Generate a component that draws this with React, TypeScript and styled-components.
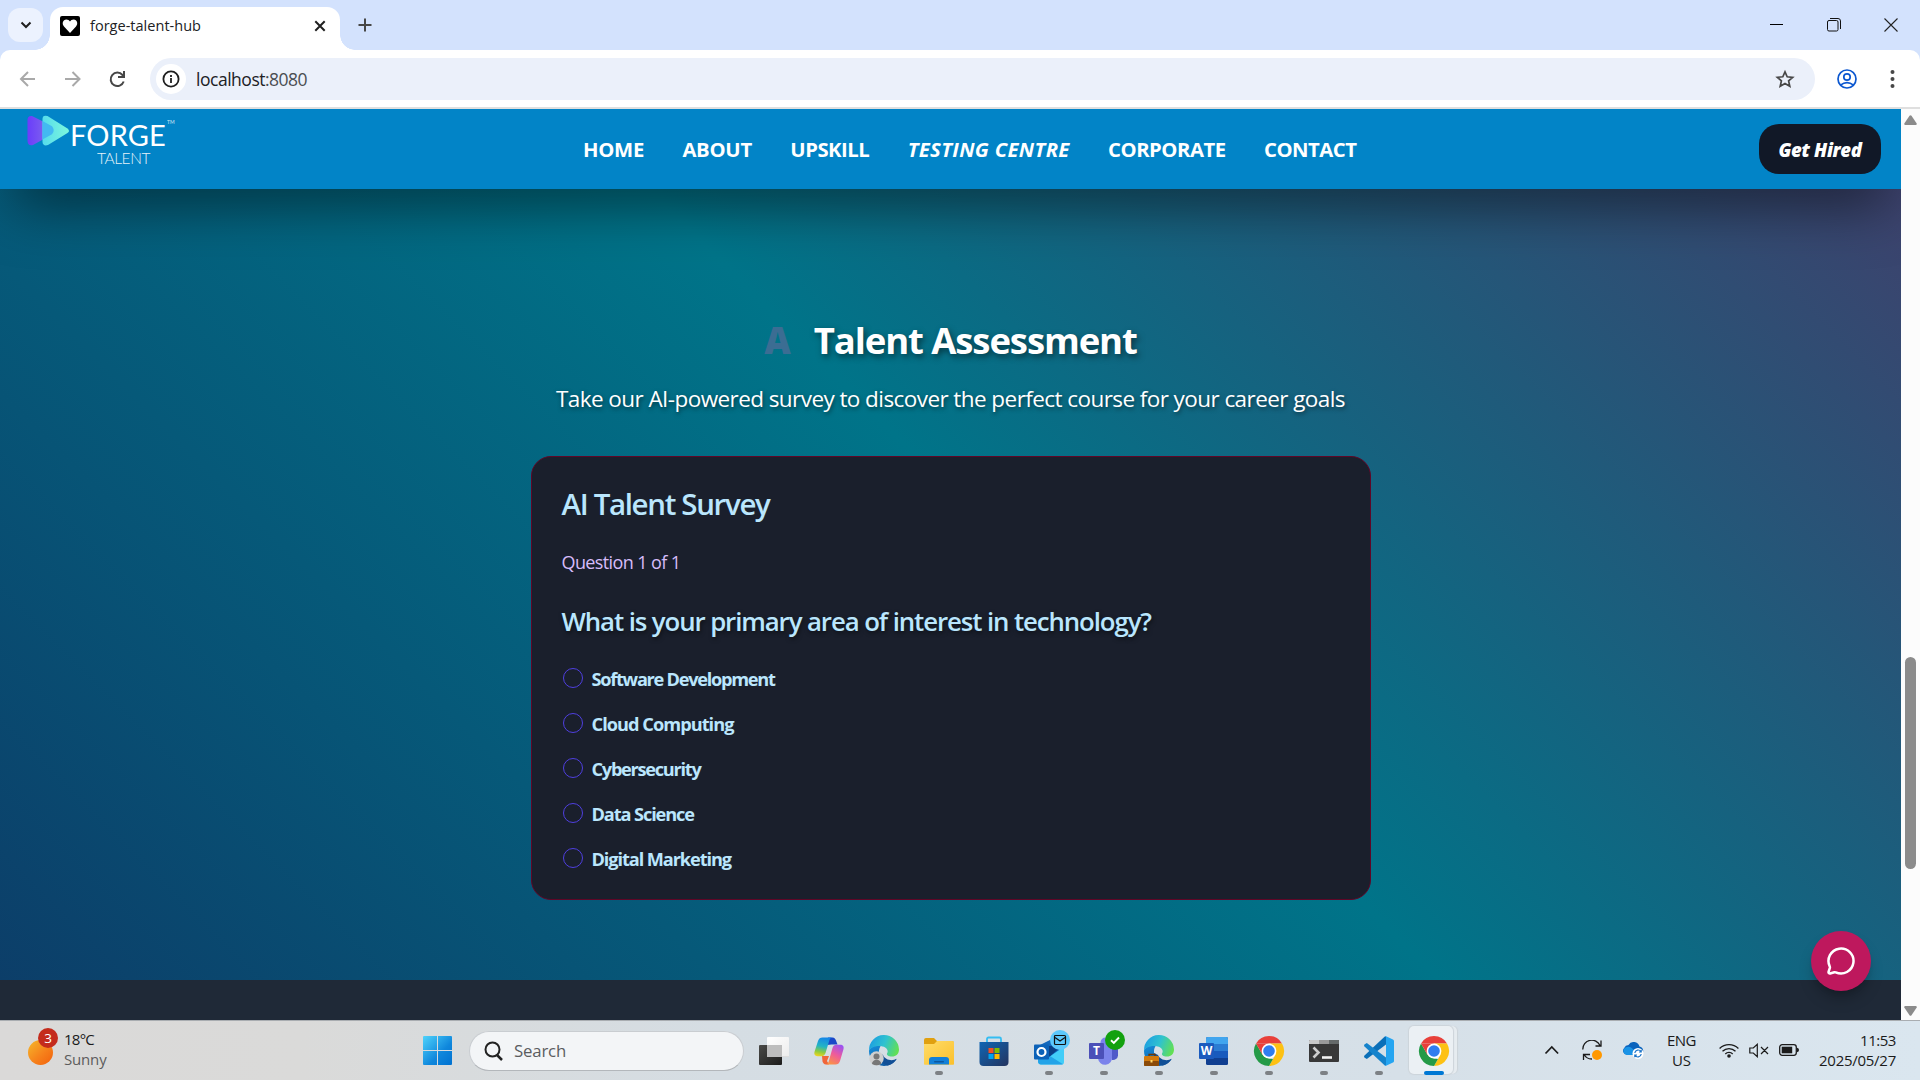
import React, { useLayoutEffect, useRef, useState } from "react";
import styled, { createGlobalStyle } from "styled-components";
import { MessageCircle } from "lucide-react";

const Global = createGlobalStyle`
  * { box-sizing: border-box; }
  html, body { margin: 0; padding: 0; }
  body { font-family: "Open Sans", "Noto Sans", sans-serif; overflow: hidden; width: 1920px; height: 1080px; }
  svg { display: block; flex: none; }
  h1, h2, h3, p, ul { margin: 0; padding: 0; }
`;

const FitSpan = styled.span`
  display: inline-block;
  white-space: pre;
`;

/* Spreads a label over a fixed advance width by adjusting its tracking. */
function Fit({ w, children }: { w: number; children: string }) {
  const ref = useRef<HTMLSpanElement>(null);
  const [spacing, setSpacing] = useState(0);
  useLayoutEffect(() => {
    if (ref.current) {
      const natural = ref.current.getBoundingClientRect().width;
      setSpacing((w - natural) / children.length);
    }
  }, []);
  return (
    <FitSpan ref={ref} style={{ letterSpacing: `${spacing}px` }}>
      {children}
    </FitSpan>
  );
}

/* ---------- Browser chrome ---------- */

const Screen = styled.div`
  width: 1920px;
  height: 1080px;
  display: flex;
  flex-direction: column;
  overflow: hidden;
  background: #d3e2fd;
`;

const TabStrip = styled.div`
  height: 50px;
  display: flex;
  align-items: flex-start;
  padding-left: 8px;
`;

const TabSearch = styled.button`
  width: 35px;
  height: 34px;
  margin-top: 8px;
  border: 0;
  border-radius: 12px;
  background: #ecf2fe;
  display: grid;
  place-items: center;
  padding: 0;
`;

const Tab = styled.div`
  position: relative;
  width: 290px;
  height: 43px;
  margin: 7px 0 0 7px;
  padding: 0 12px 6px 10px;
  background: #fff;
  border-radius: 13px 13px 0 0;
  display: flex;
  align-items: center;
  gap: 10px;
  font-size: 14.5px;
  color: #202124;
  &::before,
  &::after {
    content: "";
    position: absolute;
    bottom: 0;
    width: 15px;
    height: 15px;
  }
  &::before {
    left: -15px;
    background: radial-gradient(circle at 0 0, transparent 14.5px, #fff 15px);
  }
  &::after {
    right: -15px;
    background: radial-gradient(circle at 100% 0, transparent 14.5px, #fff 15px);
  }
`;

const TabTitle = styled.span`
  flex: 1;
  line-height: 20px;
`;

const NewTab = styled.div`
  margin: 18px 0 0 18px;
`;

const WindowButtons = styled.div`
  margin-left: auto;
  height: 50px;
  display: flex;
  padding-right: 1px;
  & > span {
    width: 57px;
    height: 49px;
    display: grid;
    place-items: center;
  }
`;

const Toolbar = styled.div`
  height: 59px;
  background: #fff;
  border-bottom: 2px solid #dfdfdf;
  border-radius: 10px 10px 0 0;
  display: flex;
  align-items: center;
  padding: 0 19px 0 18px;
`;

const NavIcons = styled.div`
  display: flex;
  gap: 26px;
  width: 132px;
`;

const Omnibox = styled.div`
  width: 1665px;
  height: 42px;
  border-radius: 21px;
  background: #ebf0fa;
  display: flex;
  align-items: center;
  padding: 0 20px 0 6px;
  font-size: 17.5px;
  color: #202124;
`;

const SiteInfo = styled.div`
  width: 30px;
  height: 30px;
  border-radius: 50%;
  background: #fff;
  display: grid;
  place-items: center;
  margin-right: 10px;
`;

const Url = styled.div`
  flex: 1;
  padding-top: 1px;
  line-height: 24px;
  & i {
    font-style: normal;
    color: #4a4d51;
  }
`;

const ToolbarEnd = styled.div`
  display: flex;
  align-items: center;
  justify-content: space-between;
  margin-left: auto;
  width: 64px;
`;

/* ---------- Page ---------- */

const Viewport = styled.div`
  height: 911px;
  display: flex;
`;

const Page = styled.main`
  position: relative;
  width: 1901px;
  height: 911px;
  display: flex;
  flex-direction: column;
  overflow: hidden;
`;

const Header = styled.header`
  position: relative;
  z-index: 1;
  height: 80px;
  background: #0284c7;
  box-shadow: 0 28px 56px -14px rgba(0, 0, 0, 0.55);
  display: flex;
  align-items: center;
  padding: 0 20px 0 26px;
`;

const Logo = styled.div`
  width: 557px;
  height: 80px;
  display: flex;
  padding-top: 6px;
`;

const LogoWords = styled.div`
  display: flex;
  flex-direction: column;
  margin-left: -2px;
  font-family: Lato, sans-serif;
  color: #fff;
`;

const Forge = styled.div`
  height: 30px;
  font-size: 29px;
  line-height: 39px;
  font-weight: 400;
  display: flex;
  & sup {
    font-size: 5px;
    line-height: 10px;
    padding: 2px 0 0 1px;
    opacity: 0.8;
  }
`;

const Talent = styled.div`
  padding-left: 27px;
  font-size: 15.5px;
  line-height: 26px;
  font-weight: 300;
  opacity: 0.9;
`;

const Menu = styled.nav`
  display: flex;
  gap: 38.4px;
  color: #fff;
  font-size: 20.3px;
  font-weight: 700;
  line-height: 28px;
`;

const MenuItem = styled.a<{ $italic?: boolean }>`
  font-style: ${(p) => (p.$italic ? "italic" : "normal")};
`;

const GetHired = styled.button`
  margin-left: auto;
  width: 122px;
  height: 50px;
  padding: 1px 0 0;
  border: 0;
  border-radius: 20px;
  background: #111827;
  color: #fff;
  font: italic 800 18.5px/24px "Open Sans", sans-serif;
`;

const Section = styled.section`
  height: 791px;
  padding-top: 131px;
  display: flex;
  flex-direction: column;
  align-items: center;
  background: linear-gradient(45deg, #0c3e69 0%, #007489 50%, #463b69 100%) 0 100% / 1901px 980px no-repeat;
`;

const Title = styled.h1`
  display: flex;
  gap: 23px;
  height: 40px;
  font-size: 36.5px;
  font-weight: 750;
  line-height: 40px;
  color: #fff;
  text-shadow: 2px 3px 6px rgba(0, 0, 0, 0.5);
`;

const FadedLetter = styled.span`
  font-weight: 800;
  color: #3b6d93;
  text-shadow: none;
`;

const Subtitle = styled.p`
  margin-top: 23px;
  font-size: 22.5px;
  line-height: 32px;
  color: #fff;
  text-shadow: 1px 2px 4px rgba(0, 0, 0, 0.5);
`;

const Card = styled.div`
  width: 840px;
  height: 444px;
  margin-top: 41px;
  padding: 28px 30px 0;
  border: 1px solid #5f0627;
  border-radius: 20px;
  background: #1a1f2c;
  color: #bae6fd;
`;

const CardTitle = styled.h2`
  font-size: 29.5px;
  font-weight: 600;
  line-height: 38px;
`;

const Progress = styled.p`
  margin-top: 27px;
  font-size: 18px;
  line-height: 24px;
  color: #d6bcfa;
`;

const Question = styled.h3`
  margin-top: 31px;
  font-size: 25.8px;
  font-weight: 640;
  line-height: 32px;
  text-shadow: 1px 2px 4px rgba(0, 0, 0, 0.5);
`;

const Options = styled.ul`
  margin-top: 19px;
  list-style: none;
`;

const Option = styled.li`
  height: 45px;
  display: flex;
  align-items: center;
  gap: 9px;
  font-size: 18.2px;
  font-weight: 660;
  line-height: 24px;
`;

const Radio = styled.span`
  width: 20px;
  height: 20px;
  margin: -2px 0 0 1px;
  border: 1px solid #4f3fe0;
  border-radius: 50%;
`;

const Footer = styled.footer`
  height: 40px;
  background: #1f2937;
`;

const ChatButton = styled.button`
  position: absolute;
  right: 30px;
  bottom: 29px;
  width: 60px;
  height: 60px;
  border: 0;
  padding: 0;
  border-radius: 50%;
  background: #be185d;
  color: #fff;
  display: grid;
  place-items: center;
  box-shadow: 0 10px 15px -3px rgba(0, 0, 0, 0.25), 0 4px 6px -4px rgba(0, 0, 0, 0.2);
`;

const Scrollbar = styled.div`
  width: 19px;
  background: #fcfcfc;
  display: flex;
  flex-direction: column;
  align-items: center;
  padding: 6px 0 4px;
`;

const Thumb = styled.div`
  width: 11px;
  height: 212px;
  margin: 532px 0 auto;
  border-radius: 6px;
  background: #8b8b8b;
`;

/* ---------- Taskbar ---------- */

const Taskbar = styled.div`
  height: 60px;
  border-top: 1px solid #a9adb1;
  background: linear-gradient(90deg, #dad9d8 0, #dadad9 300px, #d5dde3 720px, #d6e0e8 1400px, #dae6ef 1920px);
  display: flex;
  align-items: center;
  color: #1b1b1b;
  font-size: 15px;
`;

const Weather = styled.div`
  width: 394px;
  height: 59px;
  padding: 0 0 3px 26px;
  display: flex;
  align-items: center;
  gap: 6px;
  line-height: 20px;
`;

const WeatherIcon = styled.div`
  position: relative;
  width: 32px;
  height: 41px;
  padding: 11px 0 0 2px;
`;

const Sun = styled.div`
  width: 25px;
  height: 25px;
  border-radius: 50%;
  background: linear-gradient(135deg, #f5b92c, #f6821b 55%, #f2600c);
`;

const Badge = styled.div`
  position: absolute;
  left: 12px;
  top: -1px;
  width: 20px;
  height: 20px;
  border-radius: 50%;
  background: #c42b1c;
  color: #fff;
  font-size: 13.5px;
  text-align: center;
`;

const Muted = styled.div`
  color: #5c5c5c;
`;

const StartButton = styled.div`
  width: 75px;
  display: flex;
  padding-left: 29px;
`;

const Search = styled.div`
  width: 275px;
  height: 40px;
  border-radius: 20px;
  border: 1px solid #c9cdd1;
  border-bottom-color: #b3b7bb;
  background: #f3f5f7;
  display: flex;
  align-items: center;
  gap: 11px;
  padding: 0 13px;
  font-size: 16.8px;
  color: #5b5d5f;
`;

const Apps = styled.div`
  display: flex;
  margin-left: 2px;
`;

const AppCell = styled.div<{ $active?: boolean }>`
  position: relative;
  width: 55px;
  height: 59px;
  display: grid;
  place-items: center;
  & > svg {
    position: relative;
    overflow: visible;
  }
  &::before {
    content: "";
    display: ${(p) => (p.$active ? "block" : "none")};
    position: absolute;
    left: 3px;
    top: 5px;
    width: 44px;
    height: 48px;
    border-radius: 5px;
    background: #ebf0f4;
    box-shadow: 0 0 1px 1px #cdd4da, 4px 0 0 0 #e6ecf0, 5px 0 1px 0 #cdd4da;
  }
`;

const Running = styled.span<{ $active?: boolean }>`
  position: absolute;
  bottom: 5px;
  width: ${(p) => (p.$active ? 20 : 8)}px;
  height: 4px;
  border-radius: 2px;
  background: ${(p) => (p.$active ? "#0078d4" : "#7d8185")};
`;

const Tray = styled.div`
  margin-left: auto;
  display: flex;
  align-items: center;
  padding: 0 24px 2px 0;
  line-height: 20px;
`;

const TrayGroup = styled.div<{ $gap: number; $end: number }>`
  display: flex;
  align-items: center;
  gap: ${(p) => p.$gap}px;
  margin-right: ${(p) => p.$end}px;
  padding-top: 1px;
`;

const Lines = styled.div<{ $align: string; $end?: number }>`
  text-align: ${(p) => p.$align};
  margin-right: ${(p) => p.$end ?? 0}px;
`;

/* ---------- Icons ---------- */

const Chrome = () => (
  <svg width="30" height="30" viewBox="0 0 30 30">
    <path d="M2 7.5A15 15 0 0 1 28 7.5H15Z" fill="#e8403a" />
    <path d="M28 7.5A15 15 0 0 1 15 30L21.5 18.8 15 7.5Z" fill="#fdc113" />
    <path d="M15 30A15 15 0 0 1 2 7.5L8.5 18.8 15 22.5 19 23Z" fill="#249a47" />
    <path d="M2 7.5 8.5 18.8 15 15V7.5Z" fill="#e8403a" />
    <circle cx="15" cy="15" r="7.4" fill="#fff" />
    <circle cx="15" cy="15" r="5.8" fill="#2f7df0" />
  </svg>
);

const EdgeIcon = ({ work }: { work?: boolean }) => (
  <svg width="30" height="30" viewBox="0 0 30 30">
    <defs>
      <linearGradient id="edgeTop" x1="0" y1="0.3" x2="1" y2="0.6">
        <stop offset="0" stopColor="#1b9de2" />
        <stop offset="0.5" stopColor="#2fc2cf" />
        <stop offset="1" stopColor="#63e052" />
      </linearGradient>
      <linearGradient id="edgeLow" x1="0" y1="0" x2="0.6" y2="1">
        <stop offset="0" stopColor="#1690dc" />
        <stop offset="1" stopColor="#0c59a4" />
      </linearGradient>
    </defs>
    <path d="M0 15C0 12 6 8.500 12 9.500C9 13 9 20 14 24C18 27 23 26 27.500 23C25 27 20 30 15 30A15 15 0 0 1 0 15Z" fill="url(#edgeLow)" />
    <path d="M10 17C9 23 14 29.500 19 29.400C23 28.500 26 26 27.800 22.800C23 25.500 16 24 14 19Z" fill="#114f96" />
    <path d="M0 14.500A15 15 0 0 1 30 13.500C30 18 27 20.500 23 20.500C19 20.500 17.500 19 18 17.500C20 15 17.500 11 13.500 10.500C7 9 1.500 12 0 14.500Z" fill="url(#edgeTop)" />
    {work ? (
      <g>
        <path d="M5 20v-1.500h6V20" fill="none" stroke="#6b3a08" strokeWidth="1.300" />
        <rect x="0" y="20" width="15" height="10" rx="1" fill="#d27a0c" />
        <rect x="0" y="25" width="15" height="5" rx="1" fill="#8a4a08" />
        <rect x="6.500" y="24" width="2" height="2.500" fill="#ffd76a" />
      </g>
    ) : (
      <g>
        <circle cx="7.500" cy="22.500" r="7.200" fill="#cfcfcf" />
        <circle cx="7.500" cy="20.500" r="3" fill="#777" />
        <path d="M3 28a4.600 4.200 0 0 1 9.200 0q-4.500 2.500-9.200 0Z" fill="#777" />
      </g>
    )}
  </svg>
);

const TaskView = () => (
  <svg width="30" height="30" viewBox="0 0 30 30">
    <defs>
      <linearGradient id="tvDark" x1="0" y1="0" x2="1" y2="1">
        <stop offset="0" stopColor="#4a4a48" />
        <stop offset="1" stopColor="#1c1c1b" />
      </linearGradient>
      <linearGradient id="tvLight" x1="0" y1="0" x2="1" y2="1">
        <stop offset="0" stopColor="#ffffff" />
        <stop offset="1" stopColor="#ececec" />
      </linearGradient>
    </defs>
    <rect x="0" y="9" width="23" height="20" rx="1" fill="url(#tvDark)" />
    <rect x="8" y="1" width="22" height="20" rx="1" fill="url(#tvLight)" />
    <rect x="8" y="9" width="15" height="12" fill="#bdbdbd" />
    <path d="M23 20h7v1h-7z" fill="#ddd" />
  </svg>
);

const Copilot = () => (
  <svg width="30" height="30" viewBox="0 0 30 30">
    <defs>
      <linearGradient id="cpA" x1="0.4" y1="0" x2="0.2" y2="1">
        <stop offset="0" stopColor="#1688e6" />
        <stop offset="0.45" stopColor="#23b5c4" />
        <stop offset="0.75" stopColor="#8ecb3f" />
        <stop offset="1" stopColor="#f2d51e" />
      </linearGradient>
      <linearGradient id="cpB" x1="0.8" y1="0" x2="0.3" y2="1">
        <stop offset="0" stopColor="#9a52f2" />
        <stop offset="0.5" stopColor="#ee5b9b" />
        <stop offset="1" stopColor="#fb9246" />
      </linearGradient>
    </defs>
    <path d="M14 1.500h4.500c2 0 3 1.500 3.500 3l1.500 4h-6L13 9Z" fill="#1a48c8" />
    <path d="M8 20h7l-2 5 2 3.500h-3c-2 0-3-1.500-3.500-3Z" fill="#f0663a" />
    <path d="M8.500 1.500H18c-1.600.4-2.200 1.500-2.700 3L11.500 17c-.7 2-1.800 3.200-4 3.200H3.500C.8 20.200-.2 18 .6 15.500L4 5C4.800 2.600 6.300 1.500 8.500 1.500Z" fill="url(#cpA)" />
    <path d="M21.500 28.500H12c1.600-.4 2.200-1.500 2.700-3L18.500 12c.7-2 1.800-3.200 4-3.200h4c2.700 0 3.700 2.200 2.900 4.700L26 25c-.8 2.400-2.300 3.500-4.500 3.500Z" fill="url(#cpB)" />
  </svg>
);

const Explorer = () => (
  <svg width="30" height="30" viewBox="0 0 30 30">
    <defs>
      <linearGradient id="fold" x1="0" y1="0" x2="1" y2="1">
        <stop offset="0" stopColor="#ffdc68" />
        <stop offset="1" stopColor="#fbc02c" />
      </linearGradient>
    </defs>
    <path d="M0 4a2 2 0 0 1 2-2h8l3 3h15a2 2 0 0 1 2 2v4H0Z" fill="#e0a010" />
    <path d="M0 8h10l3-3h15.500L30 6v22a.8.8 0 0 1-.8.800H.800A.8.800 0 0 1 0 28Z" fill="url(#fold)" />
    <path d="M5 28.500V24a3 3 0 0 1 3-3h14a3 3 0 0 1 3 3v4.500Z" fill="#1280d8" />
    <rect x="10" y="25" width="10" height="1.500" rx=".7" fill="#0b579f" />
  </svg>
);

const Store = () => (
  <svg width="30" height="30" viewBox="0 0 30 30">
    <defs>
      <linearGradient id="store" x1="0" y1="0" x2="1" y2="1">
        <stop offset="0" stopColor="#0f66b4" />
        <stop offset="1" stopColor="#24345f" />
      </linearGradient>
    </defs>
    <path d="M8 7V3a1.500 1.500 0 0 1 1.500-1.500h11A1.500 1.500 0 0 1 22 3v4" fill="none" stroke="#35bdf2" strokeWidth="1.800" />
    <path d="M.5 6h29v20a4 4 0 0 1-4 4h-21a4 4 0 0 1-4-4Z" fill="url(#store)" />
    <rect x="9.500" y="12" width="5" height="5" fill="#f25022" />
    <rect x="15.500" y="12" width="5" height="5" fill="#7fba00" />
    <rect x="9.500" y="18" width="5" height="5" fill="#00a4ef" />
    <rect x="15.500" y="18" width="5" height="5" fill="#ffb900" />
  </svg>
);

const Outlook = () => (
  <svg width="30" height="30" viewBox="0 0 30 30">
    <path d="M6 9 20 2l10 9v12H6Z" fill="#1268bd" />
    <path d="M15 21 28 12l2 .5V26a2.500 2.500 0 0 1-2.500 2.500H7A3 3 0 0 1 4 25Z" fill="#42cdf8" />
    <path d="M4 23l12-3 13 8.200-1 .3H7A3 3 0 0 1 4 25Z" fill="#23a3e8" />
    <path d="M15 10h13L15 21Z" fill="#0a3f86" />
    <rect x="0" y="8.500" width="15" height="15" rx="1" fill="#0c62b8" />
    <circle cx="7.500" cy="16" r="4" fill="none" stroke="#fff" strokeWidth="2.200" />
    <circle cx="26" cy="4" r="10" fill="#5cc8fb" />
    <rect x="20.500" y="-.5" width="11" height="9" rx="1" fill="none" stroke="#111" strokeWidth="1.200" />
    <path d="m21 1.500 5 3.500 5-3.500" fill="none" stroke="#111" strokeWidth="1.200" />
  </svg>
);

const IconLetter = styled.text`
  font: 700 12px "Open Sans", sans-serif;
  fill: #fff;
  text-anchor: middle;
`;

const Teams = () => (
  <svg width="30" height="30" viewBox="0 0 30 30">
    <circle cx="16.500" cy="6.500" r="5" fill="#7b83eb" />
    <path d="M20 11h9v8.500a5 5 0 0 1-6 4.500Z" fill="#5059c9" />
    <path d="M9 11h14v10a7 7 0 0 1-14 1.500Z" fill="#7b83eb" />
    <rect x="0" y="7" width="15" height="16" rx="1" fill="#4b4fb8" />
    <IconLetter x="7.500" y="19.300">T</IconLetter>
    <circle cx="26" cy="4" r="10" fill="#13a10e" />
    <path d="m22 4.300 2.800 2.700L30 1.500" fill="none" stroke="#fff" strokeWidth="1.900" />
  </svg>
);

const Word = () => (
  <svg width="30" height="30" viewBox="0 0 30 30">
    <rect x="7" y="1" width="22" height="28" rx="1.500" fill="#103f91" />
    <path d="M7 2.500A1.500 1.500 0 0 1 8.500 1h19A1.500 1.500 0 0 1 29 2.500V8H7Z" fill="#41a5ee" />
    <rect x="7" y="8" width="22" height="7" fill="#2b7cd3" />
    <rect x="7" y="15" width="22" height="7" fill="#185abd" />
    <rect x="0" y="7" width="15" height="16" rx="1" fill="#1b5bbe" />
    <IconLetter x="7.500" y="19.300">W</IconLetter>
  </svg>
);

const TerminalIcon = () => (
  <svg width="30" height="30" viewBox="0 0 30 30">
    <rect x="0" y="4" width="30" height="22" rx="1" fill="#383838" />
    <path d="M0 5a1 1 0 0 1 1-1h9v4H0Z" fill="#c8c8c8" />
    <rect x="10" y="4" width="10" height="4" fill="#999" />
    <path d="M20 4h9a1 1 0 0 1 1 1v3H20Z" fill="#656a6a" />
    <path d="m4.500 11.500 5 5-5 5" fill="none" stroke="#ccc" strokeWidth="2.600" />
    <path d="M13 21.500h10" stroke="#f2f2f2" strokeWidth="2.600" />
  </svg>
);

const VsCode = () => (
  <svg width="30" height="30" viewBox="0 0 30 30">
    <path d="M22 8.500 2.800 23 .4 21.400Q-.4 20.500.5 19.600L20.500.8 22 .3Z" fill="#0a6fb8" />
    <path d="M22 21.500 2.800 7 .4 8.600Q-.4 9.500.5 10.400L20.500 29.200 22 29.700Z" fill="#1583cc" />
    <path d="M22 .2 29 3.500q1 .5 1 1.600v19.800q0 1.100-1 1.600L22 29.800q-1 .3-1.800-.6 1.500 1 1.800-.8V1.600Q21.700-.2 20.200.8 21-.1 22 .2Z" fill="#25a5f1" />
  </svg>
);

const Windows = () => (
  <svg width="29" height="29" viewBox="0 0 29 29">
    <defs>
      <linearGradient id="win" x1="0" y1="0" x2="29" y2="29" gradientUnits="userSpaceOnUse">
        <stop offset="0" stopColor="#4fd3fb" />
        <stop offset="0.6" stopColor="#0f87dc" />
        <stop offset="1" stopColor="#0071d0" />
      </linearGradient>
    </defs>
    <path d="M1 0h13v14H0V1Q0 0 1 0ZM15 0h13q1 0 1 1v13H15ZM0 15h14v14H1q-1 0-1-1ZM15 15h14v13q0 1-1 1H15Z" fill="url(#win)" />
  </svg>
);

const LogoMark = () => (
  <svg width="46" height="32" viewBox="0 0 46 32">
    <defs>
      <linearGradient id="lp" x1="0" x2="1">
        <stop offset="0" stopColor="#6a3dfb" />
        <stop offset="0.55" stopColor="#7a5af0" />
        <stop offset="1" stopColor="#4fb8f2" />
      </linearGradient>
      <linearGradient id="lt" x1="0" x2="1">
        <stop offset="0" stopColor="#55dcec" />
        <stop offset="1" stopColor="#7df7dc" />
      </linearGradient>
    </defs>
    <path d="M1.500 5q0-4.500 4.500-4L26 11q4 4 0 8.500L7 30q-5 1.500-5.500-4Z" fill="url(#lp)" />
    <path d="M16.500 4q0-4.500 5-3l20 12.500q3 2.500 0 4.500L22 30q-5 1.500-5.500-3Z" fill="url(#lt)" />
    <path d="M16.500 6 26 11.200q3.500 4 0 8L16.500 24.500Z" fill="#43b9f2" />
  </svg>
);

const options: [string, number][] = [
  ["Software Development", 183],
  ["Cloud Computing", 142],
  ["Cybersecurity", 109],
  ["Data Science", 102.5],
  ["Digital Marketing", 139.5],
];

const menu: [string, number, boolean?][] = [
  ["HOME", 61],
  ["ABOUT", 69.5],
  ["UPSKILL", 79],
  ["TESTING CENTRE", 162, true],
  ["CORPORATE", 117.5],
  ["CONTACT", 92.5],
];

const apps: { icon: React.ReactNode; running?: boolean; active?: boolean }[] = [
  { icon: <TaskView /> },
  { icon: <Copilot /> },
  { icon: <EdgeIcon /> },
  { icon: <Explorer />, running: true },
  { icon: <Store /> },
  { icon: <Outlook />, running: true },
  { icon: <Teams />, running: true },
  { icon: <EdgeIcon work />, running: true },
  { icon: <Word />, running: true },
  { icon: <Chrome />, running: true },
  { icon: <TerminalIcon />, running: true },
  { icon: <VsCode />, running: true },
  { icon: <Chrome />, running: true, active: true },
];

export default function App() {
  return (
    <Screen>
      <Global />
      <TabStrip>
        <TabSearch>
          <svg width="12" height="8" viewBox="0 0 12 8" fill="none" stroke="#1f1f1f" strokeWidth="2">
            <path d="m1.500 1.500 4.500 4.500 4.500-4.500" />
          </svg>
        </TabSearch>
        <Tab>
          <svg width="20" height="20" viewBox="0 0 20 20">
            <rect width="20" height="20" rx="2" fill="#000" />
            <path d="M10 17 4 10.500C1.500 7.500 3 3.500 6.300 3.500 8 3.500 9.300 4.400 10 5.500 10.700 4.400 12 3.500 13.700 3.500 17 3.500 18.500 7.500 16 10.500Z" fill="#fff" />
          </svg>
          <TabTitle>
            <Fit w={111}>forge-talent-hub</Fit>
          </TabTitle>
          <svg width="16" height="16" viewBox="0 0 16 16" stroke="#1f1f1f" strokeWidth="2">
            <path d="m3.300 3.300 9.400 9.400m0-9.400-9.400 9.400" />
          </svg>
        </Tab>
        <NewTab>
          <svg width="14" height="14" viewBox="0 0 14 14" stroke="#474747" strokeWidth="2">
            <path d="M7 .5v13M.5 7h13" />
          </svg>
        </NewTab>
        <WindowButtons>
          <span>
            <svg width="13" height="2" viewBox="0 0 13 2"><path d="M0 .5h13" stroke="#000" /></svg>
          </span>
          <span>
            <svg width="14" height="14" viewBox="0 0 14 14" fill="none" stroke="#111">
              <rect x=".5" y="2.500" width="10.500" height="10.500" rx="1.500" />
              <path d="M3 .5h8A2.500 2.500 0 0 1 13.500 3v8" />
            </svg>
          </span>
          <span>
            <svg width="14" height="14" viewBox="0 0 14 14" stroke="#222" strokeWidth="1.100">
              <path d="m.5.5 13 13m0-13-13 13" />
            </svg>
          </span>
        </WindowButtons>
      </TabStrip>

      <Toolbar>
        <NavIcons>
          <svg width="19" height="18" viewBox="0 0 19 18" fill="none" stroke="#a9a9a9" strokeWidth="2">
            <path d="M17 9H3.500M10 2 3 9l7 7" />
          </svg>
          <svg width="19" height="18" viewBox="0 0 19 18" fill="none" stroke="#a9a9a9" strokeWidth="2">
            <path d="M2 9h14M9.500 2l7 7-7 7" />
          </svg>
          <svg width="18" height="18" viewBox="0 0 18 18" fill="none" stroke="#474747" strokeWidth="2">
            <path d="M15.700 11.500A6.700 6.700 0 1 1 14.500 5l1.500 1.500M16 1v6h-6" />
          </svg>
        </NavIcons>
        <Omnibox>
          <SiteInfo>
            <svg width="18" height="18" viewBox="0 0 18 18" fill="none" stroke="#1f1f1f" strokeWidth="1.800">
              <circle cx="9" cy="9" r="7.600" />
              <path d="M9 8v5M9 5v1.900" />
            </svg>
          </SiteInfo>
          <Url>
            <Fit w={69}>localhost</Fit>
            <i><Fit w={42}>:8080</Fit></i>
          </Url>
          <svg width="20" height="20" viewBox="0 0 20 20" fill="none" stroke="#474747" strokeWidth="1.700">
            <path d="m10 2.800 2.200 5 5.500.5-4.100 3.600 1.200 5.400-4.800-2.900-4.800 2.900 1.200-5.400-4.100-3.600 5.500-.5Z" />
          </svg>
        </Omnibox>
        <ToolbarEnd>
          <svg width="20" height="20" viewBox="0 0 20 20" fill="none" stroke="#0b57d0" strokeWidth="1.700">
            <circle cx="10" cy="10" r="9" />
            <circle cx="10" cy="8" r="3.200" />
            <path d="M3.500 16.200Q10 11 16.500 16.200" />
          </svg>
          <svg width="16" height="20" viewBox="0 0 16 20" fill="#474747">
            <circle cx="7.500" cy="3" r="2" />
            <circle cx="7.500" cy="10" r="2" />
            <circle cx="7.500" cy="17" r="2" />
          </svg>
        </ToolbarEnd>
      </Toolbar>

      <Viewport>
        <Page>
          <Header>
            <Logo>
              <LogoMark />
              <LogoWords>
                <Forge>
                  <Fit w={96}>FORGE</Fit>
                  <sup>TM</sup>
                </Forge>
                <Talent>
                  <Fit w={53}>TALENT</Fit>
                </Talent>
              </LogoWords>
            </Logo>
            <Menu>
              {menu.map(([label, w, italic]) => (
                <MenuItem key={label} $italic={italic}>
                  <Fit w={w}>{label}</Fit>
                </MenuItem>
              ))}
            </Menu>
            <GetHired>
              <Fit w={83}>Get Hired</Fit>
            </GetHired>
          </Header>
          <Section>
            <Title>
              <FadedLetter>A</FadedLetter>
              <Fit w={323}>Talent Assessment</Fit>
            </Title>
            <Subtitle>
              <Fit w={789}>Take our AI-powered survey to discover the perfect course for your career goals</Fit>
            </Subtitle>
            <Card>
              <CardTitle>
                <Fit w={208}>AI Talent Survey</Fit>
              </CardTitle>
              <Progress>
                <Fit w={119}>Question 1 of 1</Fit>
              </Progress>
              <Question>
                <Fit w={589.5}>What is your primary area of interest in technology?</Fit>
              </Question>
              <Options>
                {options.map(([label, w]) => (
                  <Option key={label}>
                    <Radio />
                    <Fit w={w}>{label}</Fit>
                  </Option>
                ))}
              </Options>
            </Card>
          </Section>
          <Footer />
          <ChatButton>
            <MessageCircle size={30} strokeWidth={2} />
          </ChatButton>
        </Page>
        <Scrollbar>
          <svg width="13" height="10" viewBox="0 0 13 10" fill="#8b8b8b">
            <path d="M5.500.8q1-1.300 2 0L12.700 8.500q.3 1.500-1 1.500H1.300Q0 10 .3 8.500Z" />
          </svg>
          <Thumb />
          <svg width="13" height="10" viewBox="0 0 13 10" fill="#8b8b8b">
            <path d="M5.500 9.200q1 1.300 2 0L12.700 1.500q.3-1.500-1-1.500H1.300Q0 0 .3 1.500Z" />
          </svg>
        </Scrollbar>
      </Viewport>

      <Taskbar>
        <Weather>
          <WeatherIcon>
            <Sun />
            <Badge>3</Badge>
          </WeatherIcon>
          <div>
            <div><Fit w={30}>18°C</Fit></div>
            <Muted><Fit w={42.5}>Sunny</Fit></Muted>
          </div>
        </Weather>
        <StartButton>
          <Windows />
        </StartButton>
        <Search>
          <svg width="20" height="20" viewBox="0 0 20 20" fill="none" stroke="#222" strokeWidth="2">
            <circle cx="9.500" cy="8.500" r="7" />
            <path d="m14 14 5 5" strokeWidth="2.500" />
          </svg>
          <Fit w={52}>Search</Fit>
        </Search>
        <Apps>
          {apps.map((app, i) => (
            <AppCell key={i} $active={app.active}>
              {app.icon}
              {app.running && <Running $active={app.active} />}
            </AppCell>
          ))}
        </Apps>
        <Tray>
          <TrayGroup $gap={21.5} $end={23}>
            <svg width="16" height="10" viewBox="0 0 16 10" fill="none" stroke="#1b1b1b" strokeWidth="1.700">
              <path d="m1.500 8.500 6.300-6.500 6.300 6.500" />
            </svg>
            <svg width="20" height="20" viewBox="0 0 20 20" fill="none" stroke="#1b1b1b" strokeWidth="1.300">
              <path d="M.8 9.500A9 9 0 0 1 18 5.500M19 .5v5.500h-5.500M10 19A9 9 0 0 1 2 14.500M1.500 20v-5.500H8" />
              <circle cx="15" cy="15" r="5" fill="#ff9800" stroke="none" />
            </svg>
            <svg width="21" height="17" viewBox="0 0 21 17">
              <path d="M4 12.800A4 4 0 0 1 1.200 6 5 5 0 0 1 5.500 3 6 6 0 0 1 16.500 4.500 4.500 4.500 0 0 1 18 12.800Z" fill="#0a63bd" />
              <path d="M4 13A4 4 0 0 1 3 5.300 5 5 0 0 1 8 5.500L17 13Z" fill="#1a93e6" />
              <circle cx="15" cy="11.500" r="5.500" fill="#fff" />
              <path d="M11.800 11A3.300 3.300 0 0 1 18 9.800M18.200 12A3.300 3.300 0 0 1 12 13.200M18.200 7.800v2.200H16M11.800 15.200V13H14" fill="none" stroke="#1b74c9" strokeWidth="1.200" />
            </svg>
          </TrayGroup>
          <Lines $align="center" $end={23}>
            <div><Fit w={29}>ENG</Fit></div>
            <div><Fit w={19}>US</Fit></div>
          </Lines>
          <TrayGroup $gap={10} $end={20}>
            <svg width="20" height="15" viewBox="0 0 20 15" fill="none" stroke="#1b1b1b" strokeWidth="1.300">
              <path d="M.6 5.500a13.300 13.300 0 0 1 18.800 0M3.500 8.300a9.200 9.200 0 0 1 13 0M6.300 11a5.200 5.200 0 0 1 7.400 0" />
              <circle cx="10" cy="13" r="1.800" fill="#1b1b1b" stroke="none" />
            </svg>
            <svg width="20" height="15" viewBox="0 0 20 15" fill="none" stroke="#1b1b1b" strokeWidth="1.200">
              <path d="M.8 5v5h3.500l4 3.700V1.300L4.300 5ZM12 4l7 7m0-7-7 7" />
            </svg>
            <svg width="20" height="12" viewBox="0 0 20 12">
              <rect x=".7" y=".7" width="16.600" height="10.600" rx="2.500" fill="none" stroke="#1b1b1b" strokeWidth="1.300" />
              <rect x="2.700" y="2.700" width="10.500" height="6.600" fill="#1b1b1b" />
              <path d="M18 3.800q2 .3 2 2.200t-2 2.200Z" fill="#1b1b1b" />
            </svg>
          </TrayGroup>
          <Lines $align="right">
            <div><Fit w={36}>11:53</Fit></div>
            <div><Fit w={77}>2025/05/27</Fit></div>
          </Lines>
        </Tray>
      </Taskbar>
    </Screen>
  );
}
